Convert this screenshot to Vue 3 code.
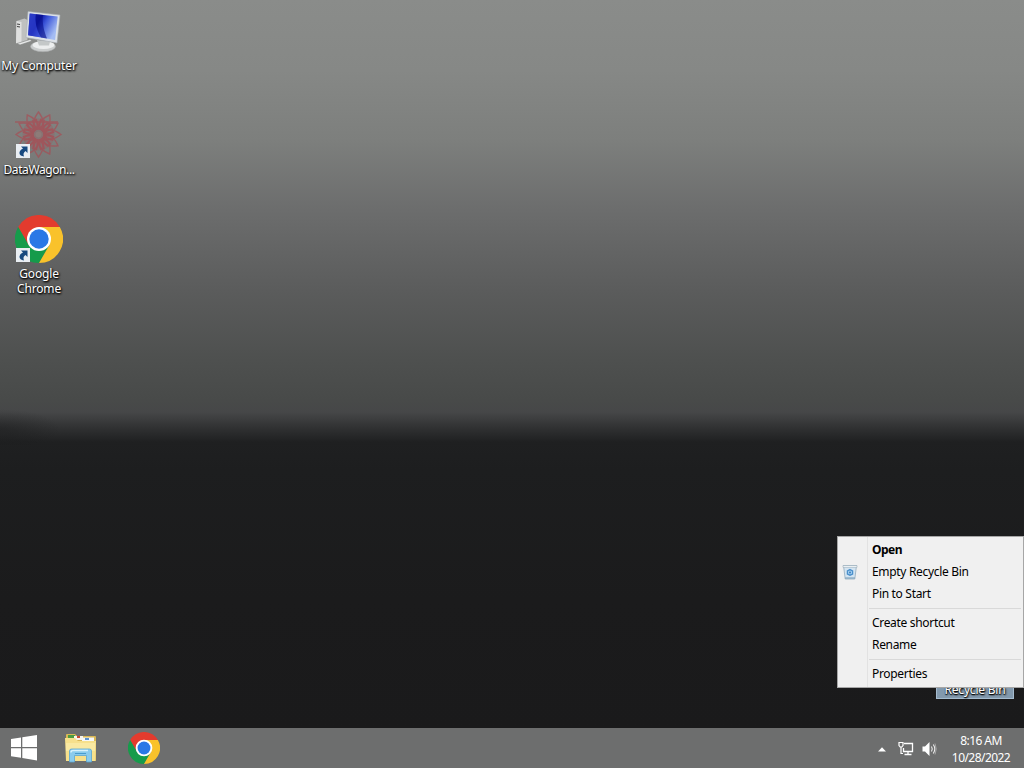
<template>
  <div class="desktop">
    <div class="wallpaper-edge"></div>
    <div class="desktop-icons">
      <div v-for="item in shortcuts" :key="item.id" class="desktop-icon">
        <div class="icon-box">
          <svg v-if="item.id === 'computer'" width="48" height="48" viewBox="0 0 48 48">
            <defs>
              <linearGradient id="screen" x1="0" y1="0" x2="1" y2="0.5">
                <stop offset="0" stop-color="#1c2cc0" />
                <stop offset="0.4" stop-color="#0d18ac" />
                <stop offset="0.6" stop-color="#3c56d8" />
                <stop offset="1" stop-color="#a4bcf4" />
              </linearGradient>
            </defs>
            <path d="M1.500 14l8-2.500 3 1.500v21L4 37l-3-1z" fill="#bfc1c0" />
            <path d="M1.500 14l5 1v21l-2.500 1-3-1z" fill="#dfe0df" />
            <path d="M2 17l3 .5M2 19.500l3 .5" stroke="#444" stroke-width="1.200" />
            <path d="M2 36.500l13-4 2 1.500L5 38z" fill="#e6e8e8" stroke="#7f8180" stroke-width=".6" />
            <ellipse cx="28" cy="39.500" rx="12.500" ry="5.200" fill="#c9cccc" stroke="#a4a6a6" stroke-width=".5" />
            <ellipse cx="28.500" cy="38" rx="11" ry="4" fill="#eceeee" />
            <path d="M22 33l13 1.500-1 4H24z" fill="#c4c8c8" />
            <path d="M13 4.500L45 8l-3 28-31-5.500z" fill="#dde2e8" stroke="#a6acb2" stroke-width=".6" />
            <path d="M14.700 6.500l28 3-2.600 23.500-27-4.700z" fill="url(#screen)" />
            <path d="M14.700 6.500l6 .6c-1 8 1 16 4.800 23.200l-12.400-2z" fill="#3547d0" opacity=".6" />
            <path d="M21 7.200l7 .7c-1 8 1 16 4 23.700l-6-1c-4-7-6-15-5-23.400z" fill="#070d86" opacity=".6" />
          </svg>
          <svg v-else-if="item.id === 'datawagon'" class="flower" width="48" height="48" viewBox="0 0 48 48">
            <circle cx="23.500" cy="23.500" r="16" fill="#ad444c" opacity=".22" />
            <g fill="none" stroke="#b3404a" stroke-width="1.400" opacity=".55">
              <path
                v-for="n in 12"
                :key="n"
                d="M23.500 18C16 14 19 7 23.500 1c4.500 6 7.500 13 0 17"
                :transform="`rotate(${n * 30} 23.500 23.500)`"
              />
              <path
                v-for="n in 12"
                :key="'s' + n"
                d="M23.500 18L17 9M23.500 18L30 9"
                :transform="`rotate(${n * 30 + 15} 23.500 23.500)`"
              />
              <path d="M0 11h43" />
              <circle cx="23.500" cy="23.500" r="6" stroke-width="2.500" />
            </g>
            <circle cx="23.500" cy="23.500" r="3" fill="#8d7c78" />
          </svg>
          <svg v-else width="48" height="48" viewBox="0 0 48 48">
            <path :d="chrome.red" fill="#e33b2e" />
            <path :d="chrome.green" fill="#169b4b" />
            <path :d="chrome.yellow" fill="#f9c22b" />
            <circle cx="24" cy="24" r="12" fill="#fff" />
            <circle cx="24" cy="24" r="9.700" fill="#2a78e6" />
          </svg>
          <svg v-if="item.link" class="link-arrow" width="14" height="14" viewBox="0 0 14 14">
            <path d="M0 0h14v14H0z" fill="#e9eef3" />
            <path d="M5 2.500h6.500V9L9.500 7C7.500 8.500 7 10 8 12.500 2.500 12 1.800 7 7 4.500z" fill="#17497f" />
          </svg>
        </div>
        <span class="icon-label" :class="item.id">{{ item.label }}</span>
      </div>
    </div>

    <div class="recycle-label">Recycle Bin</div>

    <div class="context-menu">
      <template v-for="(item, i) in menu" :key="i">
        <div v-if="item.separator" class="separator"></div>
        <div v-else class="menu-item" :class="{ default: item.bold }">
          <span class="menu-icon">
            <svg v-if="item.icon" width="16" height="16" viewBox="0 0 16 16">
              <path d="M1.500 1.500h13L12.800 15H3.200z" fill="#d3e4f1" stroke="#93abbd" stroke-width=".8" />
              <path d="M1 1.500h14v1.800H1z" fill="#f7fafc" stroke="#94a8b6" stroke-width=".6" />
              <path d="M3.200 14h9.600" stroke="#7298b4" />
              <path d="M8 5.600L10.600 7v3L8 11.200 5.400 10V7z" fill="#a5d0f1" stroke="#4a8fcb" stroke-width="1.300" />
              <circle cx="8" cy="8.400" r="1" fill="#3e80bd" />
            </svg>
          </span>
          <span class="menu-text">{{ item.text }}</span>
        </div>
      </template>
    </div>

    <div class="taskbar">
      <div class="start">
        <svg width="28" height="26" viewBox="0 0 28 26">
          <path d="M1 4l10-1.500V12H1zM12.300 2.300L27 0v12H12.300zM1 13.200h10v9.500L1 21.200zM12.300 13.200H27V25.500l-14.700-2.400z" fill="#fff" />
        </svg>
      </div>
      <div class="task">
        <svg width="34" height="30" viewBox="0 0 34 30">
          <path d="M2 2q0-1 1-1h8l2 2h18q1 0 1 1v23q0 1-1 1H2z" fill="#d9b856" />
          <path d="M4 2h7v3H4z" fill="#4d9b42" />
          <path d="M10 3h9v4h-9z" fill="#f7f5ed" />
          <path d="M13 3h3v2h-3z" fill="#cc4a31" />
          <path d="M18 4.500h12v4H18z" fill="#f5f8fb" />
          <path d="M21 5h4v2h-4z" fill="#5b93cf" />
          <path d="M1 5h10l3 3h18l-.5 20H2z" fill="#f6e08c" />
          <path d="M2 10h29v8H2z" fill="#fbeeb0" opacity=".6" />
          <path d="M5.500 29V18q0-2 2-2h18q2 0 2 2v11h-5v-6.500h-12V29z" fill="#8acbed" stroke="#5aa6d2" stroke-width=".8" />
          <path d="M7 19.500q0-2 2-2h15" fill="none" stroke="#d7f1fb" stroke-width="1.500" />
          <path d="M11 20.500h11" stroke="#4a9dcd" />
        </svg>
      </div>
      <div class="task">
        <svg width="32" height="32" viewBox="0 0 48 48">
          <path :d="chrome.red" fill="#e33b2e" />
          <path :d="chrome.green" fill="#169b4b" />
          <path :d="chrome.yellow" fill="#f9c22b" />
          <circle cx="24" cy="24" r="12.500" fill="#fff" />
          <circle cx="24" cy="24" r="9.700" fill="#2a78e6" />
        </svg>
      </div>
      <div class="tray">
        <svg class="chevron" width="8" height="5" viewBox="0 0 8 5">
          <path d="M0 4.500L4 .3l4 4.200z" fill="#fff" />
        </svg>
        <svg class="network" width="16" height="16" viewBox="0 0 16 16" fill="none" stroke="#fff">
          <path d="M6 2.500h8.500v8H5.500V7M10 10.500v3M6.500 13.500h7" stroke-width="1.300" />
          <path d="M1 1.500h4v3L3.800 6H2.200L1 4.500zM3 6v6.500h2" stroke-width="1.200" />
        </svg>
        <svg class="volume" width="16" height="16" viewBox="0 0 16 16">
          <path d="M.5 5.500H3L7.500 1v14L3 10.500H.5z" fill="#fff" />
          <path d="M9.500 5.500q1.500 2.500 0 5M11.300 3.500q3 4.500 0 9" fill="none" stroke="#eee" stroke-width="1.100" />
          <path d="M13 2.500q2.500 5.500 0 11" fill="none" stroke="#bbb" stroke-width=".7" />
        </svg>
        <div class="clock">
          <span class="time">8:16 AM</span>
          <span class="date">10/28/2022</span>
        </div>
      </div>
    </div>
  </div>
</template>

<script setup>
const shortcuts = [
  { id: 'computer', label: 'My Computer', link: false },
  { id: 'datawagon', label: 'DataWagon...', link: true },
  { id: 'chrome', label: 'Google Chrome', link: true }
]

const menu = [
  { text: 'Open', bold: true },
  { text: 'Empty Recycle Bin', icon: true },
  { text: 'Pin to Start' },
  { separator: true },
  { text: 'Create shortcut' },
  { text: 'Rename' },
  { separator: true },
  { text: 'Properties' }
]

// three blades of the logo on a 48px grid
const chrome = {
  red: 'M3.200 12A24 24 0 0 1 44.800 12H24L13.600 30z',
  green: 'M3.200 12A24 24 0 0 0 24 48L34.400 30H13.600z',
  yellow: 'M44.800 12A24 24 0 0 1 24 48L34.400 30 24 12z'
}
</script>

<style>
body {
  margin: 0;
  overflow: hidden;
}
</style>

<style scoped>
.desktop {
  position: relative;
  display: flex;
  flex-direction: column;
  width: 1024px;
  height: 768px;
  overflow: hidden;
  font-family: "Noto Sans", "Open Sans", sans-serif;
  font-size: 12px;
  line-height: 15px;
  background: linear-gradient(
    #8a8c8a 0,
    #868886 70px,
    #7d7f7d 140px,
    #6c6d6d 210px,
    #5b5c5c 290px,
    #4e504f 360px,
    #484a49 400px,
    #464748 412px,
    #303132 428px,
    #1f2021 442px,
    #1d1e1f 470px,
    #1b1b1c 600px,
    #1a1a1b 728px
  );
}

.wallpaper-edge {
  position: absolute;
  left: 0;
  top: 405px;
  width: 60px;
  height: 40px;
  background: radial-gradient(ellipse 60px 20px at 0 60%, rgba(24, 25, 26, 0.4), transparent);
}

.desktop-icons {
  flex: 1;
  display: flex;
  flex-direction: column;
  width: 78px;
  padding-top: 7px;
}

.desktop-icon {
  display: flex;
  flex-direction: column;
  align-items: center;
  height: 104px;
}

.icon-box {
  position: relative;
  width: 48px;
  height: 48px;
}

.icon-box svg {
  display: block;
}

.icon-box .flower {
  filter: blur(0.4px);
}

.icon-box .link-arrow {
  position: absolute;
  left: 1px;
  bottom: 1px;
}

.icon-label {
  width: 78px;
  margin-top: 3px;
  color: #fff;
  text-align: center;
  letter-spacing: -0.15px;
  text-shadow: 1px 1px 2px #000, 0 1px 2px #000;
}

.icon-label.datawagon {
  letter-spacing: -0.4px;
}

.icon-label.chrome {
  padding: 0 14px;
  box-sizing: border-box;
}

.recycle-label {
  position: absolute;
  left: 936px;
  top: 683px;
  width: 78px;
  height: 16px;
  box-sizing: border-box;
  border: 1px solid #a5bccf;
  background: #8299ad;
  color: #fff;
  line-height: 11px;
  text-align: center;
  letter-spacing: -0.2px;
  text-shadow: 1px 1px 2px #000, 0 1px 1px #000;
}

.context-menu {
  position: absolute;
  left: 837px;
  top: 536px;
  width: 187px;
  height: 152px;
  box-sizing: border-box;
  padding: 2px 1px;
  border: 1px solid #a6a6a6;
  background: linear-gradient(to right, #f0f0f0 29px, #e2e2e2 29px, #e2e2e2 30px, #f0f0f0 30px);
  color: #000;
}

.menu-item {
  display: flex;
  align-items: center;
  height: 22px;
}

.menu-icon {
  display: flex;
  width: 29px;
  padding-left: 3px;
  box-sizing: border-box;
}

.menu-text {
  margin-left: 4px;
  padding-bottom: 2px;
  white-space: nowrap;
  letter-spacing: -0.32px;
}

.default .menu-text {
  font-weight: 700;
  letter-spacing: -0.5px;
}

.separator {
  height: 1px;
  margin: 3px 1px 3px 30px;
  background: #d9d9d9;
}

.taskbar {
  display: flex;
  align-items: center;
  height: 40px;
  background: #6d6e6e;
}

.start {
  display: flex;
  width: 28px;
  margin-left: 10px;
}

.task {
  display: flex;
  justify-content: center;
  width: 62px;
}

.start + .task {
  margin-left: 12px;
}

.task + .task {
  margin-left: 1px;
}

.tray {
  display: flex;
  align-items: center;
  margin-left: auto;
  color: #fff;
}

.chevron {
  margin: 2px 12px 0 0;
}

.network {
  margin: 2px 8px 0 0;
}

.volume {
  margin: 2px 12px 0 0;
}

.clock {
  display: flex;
  flex-direction: column;
  align-items: center;
  width: 62px;
  margin-right: 12px;
  line-height: 17px;
  padding-top: 2px;
  letter-spacing: -0.55px;
  white-space: nowrap;
}
</style>
